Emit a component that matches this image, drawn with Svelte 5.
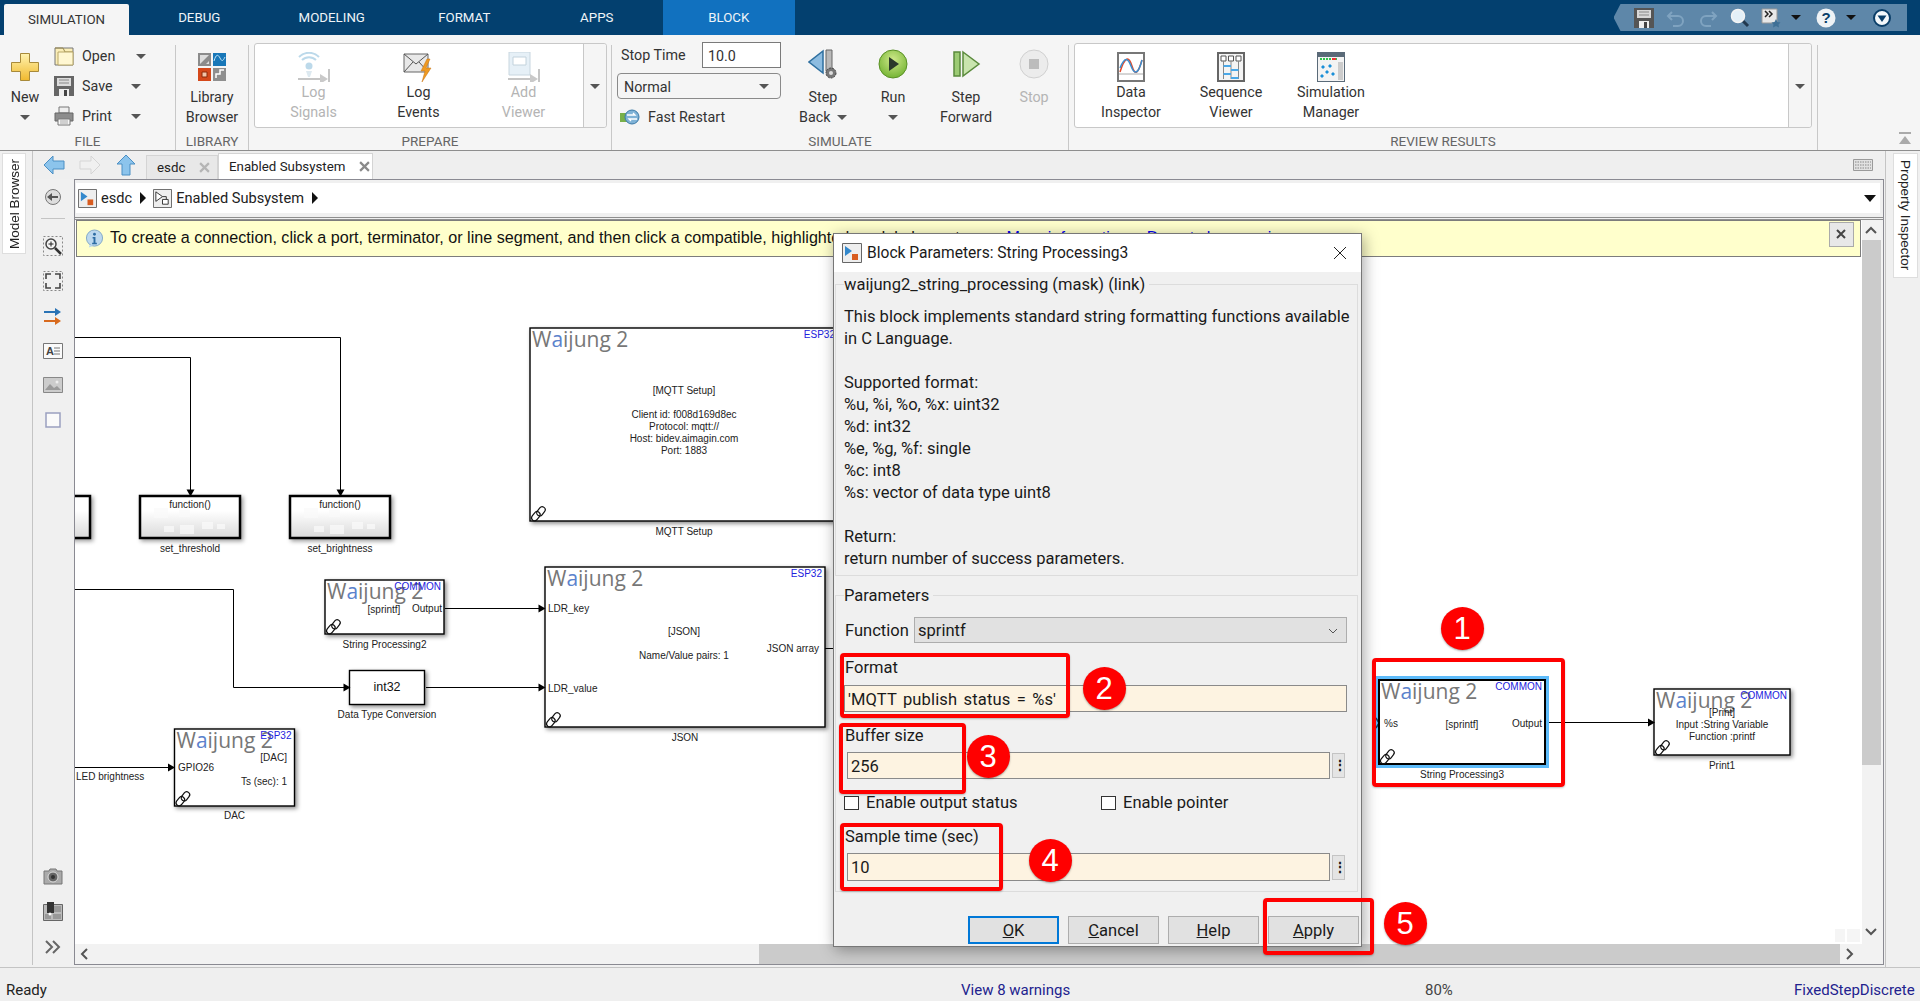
<script lang="ts">
  // Simulink model window with the Block Parameters dialog and tutorial annotations

  const tabs = ['DEBUG', 'MODELING', 'FORMAT', 'APPS'];

  // diagram coordinates are page pixels, the svg viewBox starts at the canvas corner
  const blocks = [
    {
      x: 530, y: 328, w: 308, h: 193, name: 'MQTT Setup', nameY: 531, tag: 'ESP32',
      texts: [
        { t: '[MQTT Setup]', x: 684, y: 390, a: 'middle' },
        { t: 'Client id: f008d169d8ec', x: 684, y: 414, a: 'middle' },
        { t: 'Protocol: mqtt://', x: 684, y: 426, a: 'middle' },
        { t: 'Host: bidev.aimagin.com', x: 684, y: 438, a: 'middle' },
        { t: 'Port: 1883', x: 684, y: 450, a: 'middle' }
      ]
    },
    {
      x: 325, y: 580, w: 119, h: 54, name: 'String Processing2', nameY: 644, tag: 'COMMON',
      texts: [
        { t: '[sprintf]', x: 384, y: 609, a: 'middle' },
        { t: 'Output', x: 442, y: 608, a: 'end' }
      ]
    },
    {
      x: 545, y: 567, w: 280, h: 160, name: 'JSON', nameY: 737, tag: 'ESP32',
      texts: [
        { t: 'LDR_key', x: 548, y: 608, a: 'start' },
        { t: '[JSON]', x: 684, y: 631, a: 'middle' },
        { t: 'Name/Value pairs: 1', x: 684, y: 655, a: 'middle' },
        { t: 'JSON array', x: 819, y: 648, a: 'end' },
        { t: 'LDR_value', x: 548, y: 688, a: 'start' }
      ]
    },
    {
      x: 174.5, y: 729, w: 120, h: 77, name: 'DAC', nameY: 815, tag: 'ESP32',
      texts: [
        { t: '[DAC]', x: 287, y: 757, a: 'end' },
        { t: 'GPIO26', x: 178, y: 767, a: 'start' },
        { t: 'Ts (sec): 1', x: 287, y: 781, a: 'end' }
      ]
    },
    {
      x: 1379, y: 680, w: 166, h: 84, name: 'String Processing3', nameY: 774, tag: 'COMMON', thick: true,
      texts: [
        { t: '%s', x: 1384, y: 723, a: 'start' },
        { t: '[sprintf]', x: 1462, y: 724, a: 'middle' },
        { t: 'Output', x: 1542, y: 723, a: 'end' }
      ]
    },
    {
      x: 1654, y: 689, w: 136, h: 66, name: 'Print1', nameY: 765, tag: 'COMMON',
      texts: [
        { t: '[Print]', x: 1722, y: 712, a: 'middle' },
        { t: 'Input :String Variable', x: 1722, y: 724, a: 'middle' },
        { t: 'Function :printf', x: 1722, y: 736, a: 'middle' }
      ]
    }
  ];

  const functionBlocks = [
    { x: 140, name: 'set_threshold' },
    { x: 290, name: 'set_brightness' }
  ];

  const wires = [
    'M75 337.5H340.5V490',
    'M75 357.5H190.5V490',
    'M75 589.5H233.5V687.5H344',
    'M426 687.5H539',
    'M445 608.5H539',
    'M825 648.5H834',
    'M75 767.5H169',
    'M1545 722.5H1648'
  ];

  const arrows = [
    [340.5, 495.5, 'd'], [190.5, 495.5, 'd'], [349.5, 687.5, 'r'],
    [544.5, 687.5, 'r'], [544.5, 608.5, 'r'], [174, 767.5, 'r'], [1654, 722.5, 'r']
  ];

  const redBoxes = [
    { x: 1372, y: 658, w: 193, h: 129 },
    { x: 840, y: 653, w: 230, h: 65 },
    { x: 839, y: 723, w: 127, h: 71 },
    { x: 840, y: 823, w: 163, h: 68 },
    { x: 1263, y: 898, w: 111, h: 57 }
  ];

  const pins = [
    { n: 1, x: 1462, y: 628 },
    { n: 2, x: 1104, y: 688 },
    { n: 3, x: 988, y: 756 },
    { n: 4, x: 1050, y: 860 },
    { n: 5, x: 1405, y: 923 }
  ];

  const helpLines = [
    'This block implements standard string formatting functions available',
    'in C Language.',
    '',
    'Supported format:',
    '%u, %i, %o, %x: uint32',
    '%d: int32',
    '%e, %g, %f: single',
    '%c: int8',
    '%s: vector of data type uint8',
    '',
    'Return:',
    'return number of success parameters.'
  ];
</script>

<div class="app">
  <header class="tabbar">
    <div class="rtab active">SIMULATION</div>
    {#each tabs as tab}
      <div class="rtab">{tab}</div>
    {/each}
    <div class="rtab block">BLOCK</div>
    <div class="quick">
      <svg viewBox="0 0 20 20"><path d="M0 0h20v20H0z" fill="#555"/><path d="M3 2h14v8H3z" fill="#d8d8d8"/><path d="M5 4h10M5 7h10" stroke="#888"/><path d="M5 13h10v7H5z" fill="#eee"/><path d="M10 14h3v6h-3z" fill="#444"/></svg>
      <svg viewBox="0 0 20 20" fill="none" stroke="#7fa3c0" stroke-width="2"><path d="M6 4L2 8l4 4"/><path d="M2 8h10a5 5 0 0 1 0 10H7"/></svg>
      <svg viewBox="0 0 20 20" fill="none" stroke="#7fa3c0" stroke-width="2"><path d="M14 4l4 4-4 4"/><path d="M18 8H8a5 5 0 0 0 0 10h5"/></svg>
      <svg viewBox="0 0 20 20"><path d="M12 12l6 6" stroke="#22394f" stroke-width="3"/><circle cx="8" cy="8" r="6.500" fill="#e4f0f8" stroke="#f4f4f4" stroke-width="1.500"/></svg>
      <svg viewBox="0 0 20 20"><path d="M1 1h15v14H1z" fill="#e8e8e8" stroke="#999"/><path d="M5 4l3 3-3 3M9 4l3 3-3 3" fill="none" stroke="#222" stroke-width="1.500" transform="translate(-1 -1)"/><path d="M15 11l1.500 3 3 .5-2 2 .5 3-3-1.500-3 1.500.5-3-2-2 3-.5z" fill="#3f7096"/></svg>
      <i class="caret dark"></i>
      <svg viewBox="0 0 20 20"><circle cx="10" cy="10" r="9.500" fill="#eef2f5"/><text x="10" y="15" text-anchor="middle" class="qmark">?</text></svg>
      <i class="caret dark"></i>
      <svg viewBox="0 0 20 20"><circle cx="10" cy="10" r="8" fill="#f4f8fb" stroke="#0a3e68" stroke-width="2"/><path d="M5.500 7.500h9L10 14z" fill="#0a3e68"/></svg>
    </div>
  </header>

  <div class="ribbon">
    <section class="rsec s-file">
      <div class="rbody file">
        <div class="bigbtn new">
          <svg viewBox="0 0 28 28"><defs><linearGradient id="plus" x1="0" y1="0" x2="0" y2="1"><stop offset="0" stop-color="#fff3b0"/><stop offset="1" stop-color="#f0b92e"/></linearGradient></defs><path d="M9.500.5h9v9h9v9h-9v9h-9v-9h-9v-9h9z" fill="url(#plus)" stroke="#a88a3a"/></svg>
          <span>New</span>
          <i class="caret"></i>
        </div>
        <div class="filelist">
          <div class="filerow">
            <svg viewBox="0 0 20 20"><path d="M1 2h18v17H1z" fill="#fbeeb8" stroke="#777"/><path d="M1 2h8l2 4h8" fill="none" stroke="#9a8a50"/><path d="M4 6h15v13H4z" fill="#fff7d2" stroke="#b9a868"/></svg>
            <span class="rowlabel">Open</span><i class="caret far"></i>
          </div>
          <div class="filerow">
            <svg viewBox="0 0 20 20"><path d="M0 0h20v20H0z" fill="#666"/><path d="M3 2h14v8H3z" fill="#dcdcdc"/><path d="M5 4h10M5 7h10" stroke="#888"/><path d="M5 13h10v7H5z" fill="#eee"/><path d="M10 14h3v6h-3z" fill="#444"/></svg>
            <span class="rowlabel">Save</span><i class="caret"></i>
          </div>
          <div class="filerow">
            <svg viewBox="0 0 20 20"><path d="M5 1h10v6H5z" fill="#eee" stroke="#777"/><path d="M1 7h18v8H1z" fill="#8d8d8d" stroke="#666"/><path d="M4 13h12v6H4z" fill="#f7f7f7" stroke="#777"/><path d="M6 15h8M6 17h8" stroke="#aaa"/></svg>
            <span class="rowlabel">Print</span><i class="caret"></i>
          </div>
        </div>
      </div>
      <div class="rlabel">FILE</div>
    </section>

    <section class="rsec s-lib">
      <div class="rbody">
        <div class="bigbtn wide">
          <svg viewBox="0 0 28 28"><path d="M0 0h13v13H0z" fill="#8b8b8b"/><path d="M2 11V2h9L2 11zM8 11l3-3v3z" fill="#ddd"/><path d="M15 0h13v13H15z" fill="#1877b8"/><path d="M16 8c2-7 4-7 6-3s3 3 5-1" fill="none" stroke="#bfe3f7"/><path d="M0 15h13v13H0z" fill="#d5481a"/><path d="M4 19h5v5H4z" fill="#f2c4a8" stroke="#8c2a08"/><path d="M15 15h13v13H15z" fill="#8f8f8f"/><path d="M18 25v-4h4v-4h4" fill="none" stroke="#fff" stroke-width="1.500"/></svg>
          <span>Library</span>
          <span>Browser</span>
        </div>
      </div>
      <div class="rlabel">LIBRARY</div>
    </section>

    <section class="rsec s-prep">
      <div class="rbody">
        <div class="gallery prep">
          <div class="gallery-items">
            <div class="galbtn off">
              <svg viewBox="0 0 32 30"><circle cx="11" cy="14" r="3.500" fill="#bcd9ea"/><path d="M4 8a10 10 0 0 1 14 0M1 5a14 14 0 0 1 20 0" fill="none" stroke="#bcd9ea" stroke-width="2"/><path d="M8 19h6l-2 6h-2z" fill="#dde9f0"/><path d="M0 27h24" stroke="#c5c5c5" stroke-width="2"/><path d="M22 22l8 5-8 5z" fill="#c9c9c9"/><path d="M31 17v14" stroke="#c5c5c5" stroke-width="2"/></svg>
              <span>Log</span><span>Signals</span>
            </div>
            <div class="galbtn">
              <svg viewBox="0 0 32 30"><path d="M1 2h24v18H1z" fill="#e8e8e8" stroke="#666"/><path d="M1 2l12 10L25 2M1 20l9-10M25 20l-9-10" fill="none" stroke="#555"/><path d="M24 7l-6 12h4l-3 11 9-14h-5l4-9z" fill="#ee9a22" stroke="#c67010" stroke-width=".5"/></svg>
              <span>Log</span><span>Events</span>
            </div>
            <div class="galbtn off">
              <svg viewBox="0 0 32 30"><path d="M1 0h21v23H1z" fill="#e6f0f7" stroke="#c8d6df"/><path d="M5 5h13v8H5z" fill="#fff" stroke="#c2d2dc"/><path d="M0 27h24" stroke="#c5c5c5" stroke-width="2"/><path d="M22 22l8 5-8 5z" fill="#c9c9c9"/><path d="M31 17v14" stroke="#c5c5c5" stroke-width="2"/></svg>
              <span>Add</span><span>Viewer</span>
            </div>
          </div>
          <div class="gal-more"><i class="caret"></i></div>
        </div>
      </div>
      <div class="rlabel">PREPARE</div>
    </section>

    <section class="rsec s-sim">
      <div class="rbody sim">
        <div class="simform">
          <div class="stoprow">
            <span class="stoplabel">Stop Time</span>
            <div class="stopinput">10.0</div>
          </div>
          <div class="modeselect"><span>Normal</span><i class="caret"></i></div>
          <div class="fastrow">
            <svg viewBox="0 0 20 20"><path d="M0 6h7v9H0z" fill="#79b04a"/><circle cx="12" cy="10" r="7" fill="#7fb2d6" stroke="#3b7aa8"/><path d="M7 8h8l-2-2M17 12H9l2 2" fill="none" stroke="#fff" stroke-width="1.300"/></svg>
            <span>Fast Restart</span>
          </div>
        </div>
        <div class="bigbtn b1">
          <svg viewBox="0 0 30 30"><path d="M15 2v22L1 13z" fill="#8dbce0" stroke="#2e6f9f" stroke-width="1.500"/><path d="M18 1h6v21h-6z" fill="#b9b9b9" stroke="#666"/><circle cx="23" cy="24" r="5" fill="#777" stroke="#444" stroke-dasharray="2 1"/><circle cx="23" cy="24" r="2" fill="#ddd"/></svg>
          <span>Step</span>
          <span class="withcaret">Back <i class="caret"></i></span>
        </div>
        <div class="bigbtn b2">
          <svg viewBox="0 0 30 30"><defs><radialGradient id="run" cx=".5" cy=".35" r=".7"><stop offset="0" stop-color="#cfe98a"/><stop offset="1" stop-color="#6eb02e"/></radialGradient></defs><circle cx="15" cy="15" r="14" fill="url(#run)" stroke="#5a9126"/><path d="M11 8l10 7-10 7z" fill="#2a3a2a"/></svg>
          <span>Run</span>
          <i class="caret"></i>
        </div>
        <div class="bigbtn b3">
          <svg viewBox="0 0 30 30"><path d="M3 3h6v24H3z" fill="#9ccb74" stroke="#5a8a3c" stroke-width="1.500"/><path d="M12 3l16 12-16 12z" fill="#c9e5ae" stroke="#5a8a3c" stroke-width="1.500"/></svg>
          <span>Step</span>
          <span>Forward</span>
        </div>
        <div class="bigbtn b4 off">
          <svg viewBox="0 0 30 30"><circle cx="15" cy="15" r="14" fill="#ececec" stroke="#d0d0d0"/><path d="M10 10h10v10H10z" fill="#bcbcbc"/></svg>
          <span>Stop</span>
        </div>
      </div>
      <div class="rlabel">SIMULATE</div>
    </section>

    <section class="rsec s-review">
      <div class="rbody">
        <div class="gallery review">
          <div class="gallery-items">
            <div class="galbtn rev">
              <svg viewBox="0 0 28 30"><path d="M1 1h26v28H1z" fill="#fff" stroke="#777" stroke-width="2"/><path d="M3 20c5-16 9-16 12-6s6 8 10-6" fill="none" stroke="#e2492a" stroke-width="1.500"/><path d="M3 16c5-12 8-10 11-2s7 10 11-6" fill="none" stroke="#3a8fd0" stroke-width="1.500"/><path d="M2 22h24" stroke="#aaa"/></svg>
              <span>Data</span><span>Inspector</span>
            </div>
            <div class="galbtn rev">
              <svg viewBox="0 0 28 30"><path d="M1 1h26v28H1z" fill="#f4f4f4" stroke="#666" stroke-width="2"/><path d="M4 4h5v5H4zM11.500 4h5v5h-5zM19 4h5v5h-5z" fill="#fff" stroke="#555"/><path d="M6.500 9v18M14 9v18M21.500 9v18" stroke="#888"/><path d="M6.500 14H14M14 18h7.500M6.500 22H14M14 26h7.500" stroke="#4aa8e8" stroke-width="2"/></svg>
              <span>Sequence</span><span>Viewer</span>
            </div>
            <div class="galbtn rev">
              <svg viewBox="0 0 28 30"><path d="M0 0h28v30H0z" fill="#5a6a78"/><path d="M1 5h26v24H1z" fill="#f3f3f3"/><path d="M3 7h17" stroke="#2fc24a" stroke-width="2" stroke-dasharray="2 1"/><path d="M15 7h4" stroke="#e33" stroke-width="2"/><path d="M21 10h5v18h-5z" fill="#ccc"/><path d="M6 13l2 2-2 2-2-2zM13 12l2 2-2 2-2-2zM10 18l2 2-2 2-2-2zM16 20l2 2-2 2-2-2zM5 22l2 2-2 2-2-2z" fill="#1a8fd8"/></svg>
              <span>Simulation</span><span>Manager</span>
            </div>
          </div>
          <div class="gal-more"><i class="caret"></i></div>
        </div>
      </div>
      <div class="rlabel">REVIEW RESULTS</div>
    </section>

    <div class="collapse">
      <svg viewBox="0 0 14 14"><path d="M1 1h12" stroke="#aaa" stroke-width="2"/><path d="M7 4l6 8H1z" fill="#aaa"/></svg>
    </div>
  </div>

  <div class="main">
    <aside class="rail left">
      <div class="sidetab mb">Model Browser</div>
    </aside>

    <div class="work">
      <div class="tabrow">
        <div class="nav">
          <svg viewBox="0 0 22 22"><path d="M10 2v5h11v8H10v5L1 11z" fill="#8cc4ec" stroke="#4b8fc4"/></svg>
          <svg viewBox="0 0 22 22"><path d="M12 2v5H1v8h11v5l9-9z" fill="#f0f0f0" stroke="#d5d5d5"/></svg>
          <svg viewBox="0 0 22 22"><path d="M2 10h5v11h8V10h5L11 1z" fill="#8cc4ec" stroke="#4b8fc4"/></svg>
        </div>
        <div class="doc-tab">
          <span>esdc</span><svg class="xicon" viewBox="0 0 10 10"><path d="M1 1l8 8M9 1L1 9" stroke="#b5b5b5" stroke-width="2"/></svg>
        </div>
        <div class="doc-tab current">
          <span>Enabled Subsystem</span><svg class="xicon" viewBox="0 0 10 10"><path d="M1 1l8 8M9 1L1 9" stroke="#8a8a8a" stroke-width="2"/></svg>
        </div>
        <svg class="keyboard" viewBox="0 0 20 12"><path d="M.5.5h19v11H.5z" fill="#e2e2e2" stroke="#9a9a9a"/><path d="M2 3h16M2 6h16M2 9h16" stroke="#888" stroke-dasharray="1.500 1"/></svg>
      </div>

      <div class="workbody">
        <div class="tools">
          <div class="tool first">
            <svg viewBox="0 0 20 20"><circle cx="10" cy="10" r="7.500" fill="#ddd" stroke="#777"/><path d="M4 10l5-4v3h6v2H9v3z" fill="#555"/></svg>
          </div>
          <div class="toolsep"></div>
          <div class="tool">
            <svg viewBox="0 0 20 20"><path d="M.5.5h19v19H.5z" fill="none" stroke="#888" stroke-dasharray="2 2"/><circle cx="8" cy="8" r="5" fill="#f5f5f5" stroke="#444" stroke-width="1.500"/><path d="M5.500 8h5M8 5.500v5" stroke="#222"/><path d="M12 12l6 6" stroke="#333" stroke-width="2.500"/></svg>
          </div>
          <div class="tool">
            <svg viewBox="0 0 20 20"><path d="M.5.5h19v19H.5z" fill="none" stroke="#888" stroke-dasharray="2 2"/><path d="M3 8V3h5M12 3h5v5M17 12v5h-5M8 17H3v-5" fill="none" stroke="#444" stroke-width="1.600"/></svg>
          </div>
          <div class="tool">
            <svg viewBox="0 0 20 20"><path d="M1 6h12" stroke="#2a73b5" stroke-width="2"/><path d="M12 2l6 4-6 4z" fill="#2a73b5"/><path d="M1 15h12" stroke="#d86a1e" stroke-width="2"/><path d="M12 11l6 4-6 4z" fill="#d86a1e"/></svg>
          </div>
          <div class="tool">
            <svg viewBox="0 0 20 20"><path d="M.5 2.500h19v15H.5z" fill="#fafafa" stroke="#777"/><text x="3" y="14" class="atext">A</text><path d="M11 7h6M11 10h6M11 13h6" stroke="#777"/></svg>
          </div>
          <div class="tool">
            <svg viewBox="0 0 20 20"><path d="M.5 2.500h19v15H.5z" fill="#ccc" stroke="#888"/><path d="M2 15l5-6 4 4 3-2 4 4z" fill="#9a9a9a"/><circle cx="14" cy="7" r="1.500" fill="#eee"/></svg>
          </div>
          <div class="tool">
            <svg viewBox="0 0 20 20"><path d="M3 3h14v14H3z" fill="#fafafa" stroke="#9aa0c0" stroke-width="1.500"/></svg>
          </div>
          <div class="tools-bottom">
            <div class="tool">
              <svg viewBox="0 0 20 20"><path d="M1 5h5l1-2h6l1 2h5v13H1z" fill="#aaa" stroke="#777"/><circle cx="10" cy="11" r="5" fill="#666" stroke="#ddd"/><circle cx="10" cy="11" r="2" fill="#333"/></svg>
            </div>
            <div class="tool">
              <svg viewBox="0 0 20 20"><path d="M.5 2.500h19v16H.5z" fill="#bbb" stroke="#666"/><path d="M10 4h8v6h-8zM10 12h8v5h-8zM2 12h6v5H2z" fill="#999"/><path d="M4 0h7v11H4z" fill="#333"/><circle cx="7" cy="12" r="1.500" fill="#fff"/></svg>
            </div>
            <div class="tool">
              <svg viewBox="0 0 20 20" fill="none" stroke="#666" stroke-width="2"><path d="M3 4l6 6-6 6M10 4l6 6-6 6"/></svg>
            </div>
          </div>
        </div>

        <div class="frame">
          <div class="crumbbar">
            <div class="crumbs">
              <svg class="model" viewBox="0 0 20 20"><path d="M.5.5h19v19H.5z" fill="#eee" stroke="#666"/><path d="M3 3l7 5-7 5z" fill="#3388cc"/><path d="M10 11h6v6h-6z" fill="#d85c20"/></svg>
              <span class="crumb">esdc</span>
              <i class="tri"></i>
              <svg class="model" viewBox="0 0 20 20"><path d="M.5.5h19v19H.5z" fill="#eee" stroke="#666"/><path d="M3 3l7 5-7 5z" fill="#fff" stroke="#333"/><path d="M10 11h6v5h-6z" fill="#fff" stroke="#333"/><path d="M10 8h4v3" fill="none" stroke="#333"/></svg>
              <span class="crumb">Enabled Subsystem</span>
              <i class="tri"></i>
              <i class="tri-down"></i>
            </div>
          </div>

          <div class="framebody">
            <div class="viewport">
              <div class="infobar">
                <svg class="infoicon" viewBox="0 0 20 20"><circle cx="10" cy="9" r="8.500" fill="#bcd8ee" stroke="#7fa6c6"/><path d="M5 16l-1 3 5-2z" fill="#bcd8ee"/><circle cx="10" cy="5" r="1.500" fill="#2e6da4"/><path d="M8 8h3v6h1.500v1.500h-5V14H9V9.500H8z" fill="#2e6da4"/></svg>
                <span class="infotext">To create a connection, click a port, terminator, or line segment, and then click a compatible, highlighted model element. <b class="more">More information</b>&nbsp; <b class="hide">Do not show again</b></span>
                <div class="infoclose"><svg viewBox="0 0 10 10"><path d="M1 1l8 8M9 1L1 9" stroke="#444" stroke-width="2"/></svg></div>
              </div>

              <svg class="diagram" viewBox="75 257 1787 687">
                <defs>
                  <linearGradient id="subsys" x1="0" y1="0" x2="0" y2="1">
                    <stop offset=".35" stop-color="#fff"/>
                    <stop offset="1" stop-color="#d9d9d9"/>
                  </linearGradient>
                  <g id="chain" fill="none" stroke="#111" stroke-width="1.200">
                    <g transform="rotate(-52 8 8)">
                      <rect x="-1.500" y="4.500" width="10" height="6" rx="3"/>
                      <rect x="5.500" y="5.500" width="10" height="6" rx="3"/>
                    </g>
                  </g>
                </defs>

                <path d="M1835 929h10v13h-10zM1847 929h13v13h-13z" fill="#f5f5f5"/>

                {#each wires as d}
                  <path {d} class="wire"/>
                {/each}

                <rect x="50" y="496" width="40" height="42" class="fblock" fill="url(#subsys)"/>

                {#each functionBlocks as f}
                  <g>
                    <rect x={f.x} y="496" width="100" height="42" class="fblock" fill="url(#subsys)"/>
                    <g fill="#fafafa" opacity=".75">
                      <rect x={f.x + 14} y="508" width="14" height="10"/>
                      <rect x={f.x + 39} y="510" width="11" height="7"/>
                      <rect x={f.x + 24} y="526" width="10" height="6"/>
                      <rect x={f.x + 40} y="525" width="14" height="9"/>
                      <rect x={f.x + 62} y="522" width="11" height="7"/>
                      <rect x={f.x + 77} y="524" width="8" height="5"/>
                    </g>
                    <text x={f.x + 50} y="504" class="blk mid">function()</text>
                    <text x={f.x + 50} y="548" class="blk mid">{f.name}</text>
                  </g>
                {/each}

                <rect x="349.500" y="670.500" width="75" height="34" class="plain"/>
                <text x="387" y="687" class="int32">int32</text>
                <text x="387" y="714" class="blk mid">Data Type Conversion</text>
                <text x="76" y="776" class="blk">LED brightness</text>

                <rect x="1376" y="676" width="173" height="92" fill="#5dbbfa"/>
                <path d="M1376 718l3 5-3 5" fill="none" stroke="#0b3d66" stroke-width="1.500"/>

                {#each blocks as b}
                  <g>
                    <rect x={b.x} y={b.y} width={b.w} height={b.h} class="plain" class:thick={b.thick}/>
                    <text x={b.x + 2} y={b.y + 19} class="logo">W<tspan fill="#5b82cc">a</tspan>ijung 2</text>
                    <text x={b.x + b.w - 3} y={b.y + 6} class="tag">{b.tag}</text>
                    {#each b.texts as t}
                      <text x={t.x} y={t.y} text-anchor={t.a} class="blk">{t.t}</text>
                    {/each}
                    <use href="#chain" x={b.x + 1} y={b.y + b.h - 16}/>
                    <text x={b.x + b.w / 2} y={b.nameY} class="blk mid">{b.name}</text>
                  </g>
                {/each}

                {#each arrows as [x, y, dir]}
                  {#if dir === 'd'}
                    <path d="M{x - 4} {y - 6}h8l-4 7z" fill="#000"/>
                  {:else}
                    <path d="M{x - 6} {y - 4}v8l7-4z" fill="#000"/>
                  {/if}
                {/each}
              </svg>
            </div>

            <div class="vscroll">
              <svg class="chev up" viewBox="0 0 12 8"><path d="M1 7l5-5 5 5" fill="none" stroke="#555" stroke-width="2"/></svg>
              <div class="vthumb"></div>
              <svg class="chev down" viewBox="0 0 12 8"><path d="M1 1l5 5 5-5" fill="none" stroke="#555" stroke-width="2"/></svg>
            </div>

            <div class="hscroll">
              <svg class="chevh" viewBox="0 0 8 12"><path d="M7 1L2 6l5 5" fill="none" stroke="#555" stroke-width="2"/></svg>
              <div class="hthumb"></div>
              <svg class="chevh" viewBox="0 0 8 12"><path d="M1 1l5 5-5 5" fill="none" stroke="#555" stroke-width="2"/></svg>
            </div>
          </div>
        </div>
      </div>
    </div>

    <aside class="rail right">
      <div class="sidetab pi">Property Inspector</div>
    </aside>
  </div>

  <footer class="status">
    <span class="ready">Ready</span>
    <span class="link">View 8 warnings</span>
    <span class="zoomlevel">80%</span>
    <span class="link">FixedStepDiscrete</span>
  </footer>

  <div class="dialog">
    <div class="dlgtitle">
      <svg viewBox="0 0 20 20"><path d="M.5.5h19v19H.5z" fill="#eee" stroke="#666"/><path d="M3 3l7 5-7 5z" fill="#3388cc"/><path d="M10 11h6v6h-6z" fill="#d85c20"/></svg>
      <span>Block Parameters: String Processing3</span>
      <svg class="dlgclose" viewBox="0 0 14 14"><path d="M1 1l12 12M13 1L1 13" stroke="#222" stroke-width="1"/></svg>
    </div>

    <fieldset class="group desc">
      <legend>waijung2_string_processing (mask) (link)</legend>
      {#each helpLines as line}
        <div class="helpline">{line}</div>
      {/each}
    </fieldset>

    <fieldset class="group params">
      <legend>Parameters</legend>
      <div class="fnrow">
        <span class="fnlabel">Function</span>
        <div class="select">
          <span>sprintf</span>
          <svg viewBox="0 0 10 6"><path d="M1 1l4 4 4-4" fill="none" stroke="#555"/></svg>
        </div>
      </div>

      <div class="flabel format-label">Format</div>
      <div class="input tall">'MQTT publish status = %s'</div>

      <div class="flabel buffer-label">Buffer size</div>
      <div class="inputrow">
        <div class="input">256</div>
        <div class="dots">⋮</div>
      </div>

      <div class="checks">
        <label><i class="box"></i>Enable output status</label>
        <label><i class="box"></i>Enable pointer</label>
      </div>

      <div class="flabel sample-label">Sample time (sec)</div>
      <div class="inputrow">
        <div class="input last">10</div>
        <div class="dots">⋮</div>
      </div>
    </fieldset>

    <div class="dlgbuttons">
      <div class="btn default"><u>O</u>K</div>
      <div class="btn"><u>C</u>ancel</div>
      <div class="btn"><u>H</u>elp</div>
      <div class="btn"><u>A</u>pply</div>
    </div>
  </div>

  {#each redBoxes as r}
    <div class="redbox" style="left: {r.x}px; top: {r.y}px; width: {r.w}px; height: {r.h}px"></div>
  {/each}
  {#each pins as p}
    <div class="pin" style="left: {p.x - 21.5}px; top: {p.y - 21.5}px">{p.n}</div>
  {/each}
</div>

<style>
  :global(body) {
    margin: 0;
  }

  .app {
    position: relative;
    width: 1920px;
    height: 1001px;
    overflow: hidden;
    background: #f0f0f0;
    font-family: Roboto, "Liberation Sans", sans-serif;
    color: #222;
  }

  /* top tab strip */
  .tabbar {
    display: flex;
    height: 35px;
    background: #03406f;
  }

  .rtab {
    width: 132.5px;
    text-align: center;
    line-height: 35px;
    font-size: 13.3px;
    color: #eef4f8;
  }

  .rtab.active {
    width: 125px;
    margin: 4px 4px 0 4px;
    line-height: 31px;
    color: #333;
    background: #f5f5f5;
    border-radius: 2px 2px 0 0;
  }

  .rtab.block {
    width: 131.5px;
    background: #1171bf;
  }

  .quick {
    display: grid;
    grid-template-columns: 32px 32px 32px 32px 30px 19px 42px 8px 54px;
    justify-items: center;
    align-items: center;
    width: 293.5px;
    height: 27px;
    margin: 4px 13px 0 auto;
    padding-left: 14.5px;
    box-sizing: border-box;
    background: #5e87a9;
    clip-path: polygon(0 50%, 7px 0, 100% 0, 100% 100%, 7px 100%);
  }

  .quick svg {
    width: 20px;
    height: 20px;
  }

  .qmark {
    font: bold 15px "Liberation Sans", sans-serif;
    fill: #0a3e68;
  }

  .caret {
    display: inline-block;
    width: 0;
    height: 0;
    border-top: 5px solid #555;
    border-left: 5px solid transparent;
    border-right: 5px solid transparent;
  }

  .caret.dark {
    border-top-color: #111;
  }

  /* ribbon */
  .ribbon {
    display: flex;
    position: relative;
    height: 115px;
    background: #f5f5f5;
    border-bottom: 1px solid #8e8e8e;
    font-size: 14.3px;
    color: #333;
  }

  .rsec {
    display: flex;
    flex-direction: column;
    box-sizing: border-box;
    height: 105px;
    margin-top: 10px;
    border-right: 1px solid #c8c8c8;
  }

  .s-file { width: 176px; }
  .s-lib { width: 73px; }
  .s-prep { width: 363px; }
  .s-sim { width: 457px; }
  .s-review { width: 749px; }

  .rbody {
    display: flex;
    height: 88px;
  }

  .rlabel {
    text-align: center;
    font-size: 13.5px;
    line-height: 18px;
    color: #666;
  }

  .bigbtn {
    display: flex;
    flex-direction: column;
    align-items: center;
    box-sizing: border-box;
    padding-top: 4px;
    line-height: 20px;
  }

  .bigbtn svg {
    width: 30px;
    height: 30px;
    margin-bottom: 8px;
  }

  .bigbtn .caret {
    margin-top: 8px;
  }

  .bigbtn.new {
    width: 50px;
  }

  .bigbtn.wide {
    width: 100%;
  }

  .bigbtn.new svg,
  .bigbtn.wide svg {
    width: 28px;
    height: 28px;
    margin: 4px 0 6px;
  }

  .b1, .b2 { width: 70px; }
  .b3 { width: 76px; }
  .b4 { width: 60px; }

  .withcaret .caret {
    margin: 0 0 1px 3px;
    vertical-align: middle;
  }

  .off {
    color: #b4b4b4;
  }

  .filelist {
    margin: -4px 0 0 4px;
  }

  .filerow {
    display: flex;
    align-items: center;
    height: 30px;
  }

  .filerow svg {
    width: 20px;
    height: 20px;
    margin-right: 8px;
  }

  .rowlabel {
    width: 49px;
  }

  .filerow .caret.far {
    margin-left: 5px;
  }

  .gallery {
    display: flex;
    box-sizing: border-box;
    height: 85px;
    margin: -2px 0 0 5px;
    background: #fff;
    border: 1px solid #c8c8c8;
    border-radius: 3px;
  }

  .gallery.prep { width: 353px; }
  .gallery.review { width: 738px; }

  .gallery-items {
    display: flex;
    flex: 1;
    padding-left: 6px;
  }

  .gal-more {
    display: flex;
    justify-content: center;
    width: 23px;
    padding-top: 40px;
    box-sizing: border-box;
    background: #f5f5f5;
    border-left: 1px solid #c8c8c8;
    border-radius: 0 3px 3px 0;
  }

  .gal-more .caret {
    height: 0;
  }

  .galbtn {
    display: flex;
    flex-direction: column;
    align-items: center;
    width: 105px;
    padding-top: 8px;
    line-height: 20px;
  }

  .galbtn.rev {
    width: 100px;
  }

  .galbtn svg {
    width: 32px;
    height: 30px;
  }

  .galbtn.rev svg {
    width: 28px;
  }

  .simform {
    width: 176px;
    box-sizing: border-box;
    padding: 0 7px 0 5px;
  }

  .stoprow {
    display: flex;
    align-items: center;
    justify-content: space-between;
    height: 26px;
    margin: -3px 0 5px 4px;
  }

  .stopinput {
    box-sizing: border-box;
    width: 79px;
    height: 26px;
    padding-left: 5px;
    line-height: 26px;
    background: #fff;
    border: 1px solid #7a7a7a;
  }

  .modeselect {
    display: flex;
    align-items: center;
    justify-content: space-between;
    box-sizing: border-box;
    width: 164px;
    height: 26px;
    padding: 1px 11px 0 6px;
    border: 1px solid #8a8a8a;
    border-radius: 4px;
  }

  .fastrow {
    display: flex;
    align-items: center;
    height: 24px;
    margin: 6px 0 0 3px;
  }

  .fastrow svg {
    width: 20px;
    height: 20px;
    margin-right: 8px;
  }

  .collapse {
    position: absolute;
    right: 8px;
    top: 97px;
    width: 14px;
    height: 14px;
  }

  /* main area */
  .main {
    display: flex;
    height: 816px;
  }

  .rail.left {
    width: 32px;
    height: 814px;
    border-right: 1px solid #c4c4c4;
  }

  .rail.right {
    width: 34px;
    border-left: 1px solid #c4c4c4;
    margin-left: 1px;
  }

  .sidetab {
    writing-mode: vertical-rl;
    text-align: center;
    box-sizing: border-box;
    background: #fff;
    border: 1px solid #dedede;
    font-family: "Liberation Sans", sans-serif;
    font-size: 13.5px;
    color: #222;
    line-height: 23px;
  }

  .mb {
    transform: rotate(180deg);
    width: 24px;
    height: 101px;
    margin: 2px 0 0 2px;
  }

  .pi {
    width: 25px;
    height: 125px;
    margin: 2px 0 0 7px;
  }

  .work {
    display: flex;
    flex-direction: column;
    width: 1852px;
  }

  .tabrow {
    display: flex;
    align-items: flex-end;
    height: 28px;
    background: #efefef;
  }

  .nav {
    display: flex;
    flex: none;
    align-self: center;
    width: 113px;
    box-sizing: border-box;
    padding-left: 10px;
  }

  .nav svg {
    flex: none;
    width: 22px;
    height: 22px;
    margin-right: 14px;
  }

  .doc-tab {
    display: flex;
    align-items: center;
    flex: none;
    box-sizing: border-box;
    width: 72px;
    height: 24px;
    padding-left: 10px;
    background: #e8e8e8;
    border: 1px solid #d4d4d4;
    border-bottom: none;
    font-size: 13.3px;
    white-space: nowrap;
  }

  .doc-tab.current {
    width: 155px;
    height: 26px;
    background: #fff;
  }

  .xicon {
    width: 11px;
    height: 11px;
    margin-left: 14px;
  }

  .keyboard {
    align-self: center;
    width: 20px;
    height: 12px;
    margin: 0 11px 0 auto;
  }

  .workbody {
    display: flex;
    height: 786px;
  }

  .tools {
    display: flex;
    flex-direction: column;
    align-items: center;
    box-sizing: border-box;
    width: 41px;
    padding: 8px 0;
    gap: 14.8px;
  }

  .tool {
    width: 20px;
    height: 20px;
  }

  .tool.first {
    margin-bottom: 11px;
  }

  .tool svg {
    display: block;
    width: 20px;
    height: 20px;
  }

  .toolsep {
    width: 24px;
    height: 1px;
    margin: -14.8px 0 2.5px;
    background: #c4c4c4;
  }

  .tools-bottom {
    display: flex;
    flex-direction: column;
    gap: 15.5px;
    margin-top: auto;
  }

  .frame {
    box-sizing: border-box;
    width: 1810px;
    height: 786px;
    border: 1px solid #8a8a92;
  }

  .crumbbar {
    box-sizing: border-box;
    height: 40px;
    padding: 3px 3px 4px 1px;
    border-bottom: 3px double #8f8f8f;
  }

  .crumbs {
    display: flex;
    align-items: center;
    height: 30px;
    padding-left: 2px;
    background: #fff;
    font-size: 14.6px;
  }

  .model {
    width: 19px;
    height: 19px;
    margin-right: 4px;
  }

  .crumb {
    margin-right: 8px;
  }

  .tri {
    width: 0;
    height: 0;
    margin-right: 7px;
    border-left: 6px solid #111;
    border-top: 6px solid transparent;
    border-bottom: 6px solid transparent;
  }

  .tri-down {
    width: 0;
    height: 0;
    margin: 0 4px 0 auto;
    border-top: 7px solid #111;
    border-left: 6px solid transparent;
    border-right: 6px solid transparent;
  }

  .framebody {
    display: grid;
    grid-template-columns: 1787px 19px;
    grid-template-rows: 724px 20px;
    background: #f2f2f2;
  }

  .viewport {
    display: flex;
    flex-direction: column;
    background: #fff;
    overflow: hidden;
  }

  .infobar {
    display: flex;
    align-items: center;
    box-sizing: border-box;
    width: 1785px;
    height: 37px;
    margin-left: 1px;
    padding-left: 8px;
    background: #ffffcc;
    border: 1px solid #7c7c7c;
    font-family: "Liberation Sans", Arial, sans-serif;
    font-size: 16.15px;
    color: #111;
  }

  .infoicon {
    width: 19px;
    height: 20px;
    margin-right: 6px;
  }

  .infotext {
    flex: 1;
    margin-top: -2px;
    white-space: nowrap;
  }

  .infotext b {
    font-weight: normal;
    color: #0000ee;
  }

  .infotext .more {
    margin-left: 38px;
  }

  .infotext .hide {
    margin-left: 10px;
  }

  .infoclose {
    display: flex;
    align-items: center;
    justify-content: center;
    box-sizing: border-box;
    width: 25px;
    height: 25px;
    margin: -9px 6px 0 0;
    background: #e8e8e8;
    border: 1px solid #aaa;
  }

  .infoclose svg {
    width: 10px;
    height: 10px;
  }

  .diagram {
    display: block;
    width: 1787px;
    height: 687px;
    font-family: "Liberation Sans", Arial, sans-serif;
  }

  .wire {
    fill: none;
    stroke: #000;
    stroke-width: 1;
  }

  .plain {
    fill: #fff;
    stroke: #000;
    stroke-width: 1.4;
    filter: drop-shadow(2px 2px 2px rgba(0, 0, 0, 0.45));
  }

  .plain.thick {
    stroke-width: 2;
    filter: none;
  }

  .fblock {
    stroke: #000;
    stroke-width: 2.5;
    filter: drop-shadow(2px 2px 2px rgba(0, 0, 0, 0.4));
  }

  .blk {
    font-size: 10px;
    fill: #222;
    dominant-baseline: central;
  }

  .mid {
    text-anchor: middle;
  }

  .int32 {
    font-size: 12.5px;
    fill: #111;
    text-anchor: middle;
    dominant-baseline: central;
  }

  .logo {
    font-family: "Open Sans", sans-serif;
    font-size: 21px;
    fill: #777;
  }

  .tag {
    font-size: 10px;
    fill: #2222dd;
    text-anchor: end;
    dominant-baseline: central;
  }

  .atext {
    font: bold 11px "Liberation Sans", sans-serif;
    fill: #444;
  }

  .vscroll {
    position: relative;
    display: flex;
    flex-direction: column;
    align-items: center;
  }

  .chev {
    width: 12px;
    height: 8px;
  }

  .chev.up {
    margin-top: 6px;
    margin-bottom: 6px;
  }

  .vthumb {
    width: 19px;
    height: 525px;
    background: #cbcbcb;
  }

  .chev.down {
    margin-top: auto;
    margin-bottom: 8px;
  }

  .hscroll {
    display: flex;
    align-items: center;
    grid-column: 1 / 3;
    padding-left: 5px;
  }

  .chevh {
    width: 8px;
    height: 12px;
  }

  .hthumb {
    width: 1081px;
    height: 20px;
    margin: 0 6px 0 671px;
    background: #cbcbcb;
  }

  /* status bar */
  .status {
    display: grid;
    grid-template-columns: 961px 464px 369px auto;
    align-items: center;
    box-sizing: border-box;
    height: 34px;
    padding-top: 11px;
    background: #efefef;
    border-top: 1px solid #c4c4c4;
    font-size: 15px;
  }

  .ready {
    padding-left: 6px;
  }

  .link {
    color: #22228e;
  }

  .zoomlevel {
    color: #444;
  }

  /* dialog */
  .dialog {
    position: absolute;
    left: 833px;
    top: 233px;
    box-sizing: border-box;
    width: 529px;
    height: 714px;
    background: #f0f0f0;
    border: 1px solid #777;
    box-shadow: 2px 3px 14px rgba(0, 0, 0, 0.35);
    font-size: 16.55px;
    color: #1a1a1a;
  }

  .dlgtitle {
    display: flex;
    align-items: center;
    height: 38px;
    padding-left: 8px;
    background: #fff;
    font-size: 15.6px;
  }

  .dlgtitle svg {
    width: 20px;
    height: 20px;
    margin-right: 5px;
  }

  .dlgtitle .dlgclose {
    width: 14px;
    height: 14px;
    margin: 0 14px 0 auto;
  }

  .group {
    box-sizing: border-box;
    min-width: 0;
    width: 523px;
    margin: 0 0 0 1px;
    padding: 0 10px 0 8px;
    border: 1px solid #dcdcdc;
  }

  .group legend {
    padding: 0 4px 0 0;
    line-height: 24px;
    height: 22px;
  }

  .desc {
    margin-top: 1px;
    padding-top: 10px;
    padding-bottom: 6px;
  }

  .helpline {
    height: 22px;
    line-height: 23px;
    white-space: nowrap;
  }

  .params {
    margin-top: 8px;
    padding-bottom: 10px;
  }

  .fnrow {
    display: flex;
    align-items: center;
    justify-content: space-between;
    margin-top: 11px;
    line-height: 24px;
  }

  .fnlabel {
    padding: 2px 0 0 1px;
  }

  .select {
    display: flex;
    align-items: center;
    justify-content: space-between;
    box-sizing: border-box;
    width: 433px;
    height: 26px;
    padding: 1px 8px 0 3px;
    background: #e1e1e1;
    border: 1px solid #adadad;
  }

  .select svg {
    width: 10px;
    height: 6px;
  }

  .flabel {
    height: 22px;
    line-height: 24px;
    margin-left: 1px;
  }

  .format-label { margin-top: 13px; margin-bottom: 7px; }
  .buffer-label { margin-top: 12px; margin-bottom: 6px; }
  .sample-label { margin-top: 11px; margin-bottom: 6px; }

  .input {
    box-sizing: border-box;
    height: 27px;
    padding-left: 3px;
    line-height: 27px;
    background: #fdf3e1;
    border: 1px solid #8a8a8a;
  }

  .input.tall {
    word-spacing: 2px;
    letter-spacing: 0.15px;
  }

  .input.last {
    height: 28px;
    line-height: 28px;
  }

  .inputrow {
    display: flex;
    align-items: center;
    gap: 2px;
    margin-left: 3px;
    padding-right: 2px;
  }

  .inputrow .input {
    flex: 1;
  }

  .dots {
    box-sizing: border-box;
    width: 13px;
    height: 25px;
    text-align: center;
    line-height: 23px;
    font-weight: bold;
    background: #e4e4e4;
    border: 1px solid #c4c4c4;
    font-size: 14px;
  }

  .checks {
    display: grid;
    grid-template-columns: 257px auto;
    height: 22px;
    margin: 13px 0 0 0;
    line-height: 22px;
  }

  .checks label {
    display: flex;
    align-items: center;
  }

  .box {
    box-sizing: border-box;
    width: 15px;
    height: 14px;
    margin-right: 7px;
    background: #fff;
    border: 1px solid #333;
  }

  .dlgbuttons {
    display: flex;
    justify-content: flex-end;
    gap: 9px;
    margin-top: 24px;
    padding-right: 2px;
  }

  .btn {
    box-sizing: border-box;
    width: 91px;
    height: 28px;
    text-align: center;
    line-height: 28px;
    background: #e1e1e1;
    border: 1px solid #adadad;
  }

  .btn.default {
    border: 2px solid #0078d7;
    line-height: 26px;
  }

  /* tutorial annotations */
  .redbox {
    position: absolute;
    box-sizing: border-box;
    border: 4px solid #f00;
    border-radius: 4px;
    box-shadow: 0 1px 2px rgba(0, 0, 0, 0.25);
  }

  .pin {
    position: absolute;
    width: 43px;
    height: 43px;
    text-align: center;
    line-height: 43px;
    font-family: "Liberation Sans", Arial, sans-serif;
    font-size: 31px;
    color: #fff;
    background: #f00;
    border-radius: 50%;
    box-shadow: 0 1px 2px rgba(0, 0, 0, 0.35);
  }
</style>
